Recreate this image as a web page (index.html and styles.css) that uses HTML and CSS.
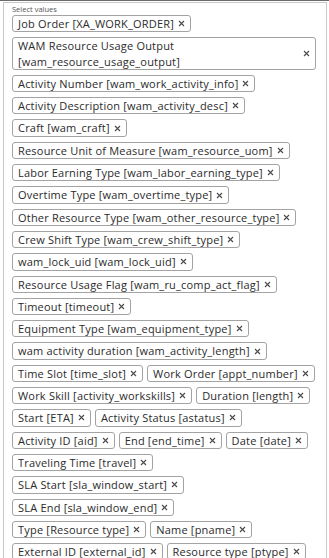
FILE: index.html
```html
<!DOCTYPE html>
<html>
<head>
    <title>Select values</title>
    <link rel="stylesheet" href="styles.css">
</head>
<body>
    <div class="frame">
        <div class="select-box">
            <div class="select-label">Select values</div>
            <div class="chips" id="chips"></div>
        </div>
    </div>

    <script>
        // Selected fields, in the order they were picked ('|' forces a new line)
        const values = [
            'Job Order [XA_WORK_ORDER]',
            'WAM Resource Usage Output [wam_resource_usage_output]',
            'Activity Number [wam_work_activity_info]',
            'Activity Description [wam_activity_desc]',
            'Craft [wam_craft]',
            'Resource Unit of Measure [wam_resource_uom]',
            'Labor Earning Type [wam_labor_earning_type]',
            'Overtime Type [wam_overtime_type]',
            'Other Resource Type [wam_other_resource_type]',
            'Crew Shift Type [wam_crew_shift_type]',
            'wam_lock_uid [wam_lock_uid]',
            'Resource Usage Flag [wam_ru_comp_act_flag]',
            'Timeout [timeout]',
            'Equipment Type [wam_equipment_type]',
            'wam activity duration [wam_activity_length]',
            'Time Slot [time_slot]',
            'Work Order [appt_number]',
            'Work Skill [activity_workskills]',
            'Duration [length]',
            'Start [ETA]',
            'Activity Status [astatus]',
            'Activity ID [aid]',
            'End [end_time]',
            'Date [date]',
            'Traveling Time [travel]',
            'SLA Start [sla_window_start]',
            'SLA End [sla_window_end]',
            '|',
            'Type [Resource type]',
            'Name [pname]',
            'External ID [external_id]',
            'Resource type [ptype]'
        ];

        const closeIcon = '<svg width="7" height="7" viewBox="0 0 7 7"><path d="M1 1L6 6M6 1L1 6" stroke="#4a4a4a" stroke-width="1.1"/></svg>';

        const list = document.getElementById('chips');
        values.forEach(function(v) {
            if (v === '|') {
                const br = document.createElement('span');
                br.className = 'chip-break';
                list.appendChild(br);
                return;
            }
            const chip = document.createElement('span');
            chip.className = 'chip';
            chip.innerHTML = '<span class="chip-text">' + v + '</span><span class="chip-close">' + closeIcon + '</span>';
            list.appendChild(chip);
        });
    </script>
</body>
</html>
```

FILE: styles.css
```css
body {
    margin: 0;
    font-family: "Open Sans", Arial, sans-serif;
    color: #2b2b2b;
    background: #fff;
}
.frame {
    border-top: 1px solid #6b6b6b;
    height: 557px;
    overflow: hidden;
}
.select-box {
    margin: 1px 2px 0 3px;
    border: 1px solid #c9c9c9;
    padding: 1px 10px 10px 8px;
    min-height: 600px;
}
.select-label {
    font-size: 7.5px;
    line-height: 10px;
    color: #555;
    margin-bottom: 1px;
}
.chips {
    display: flex;
    flex-wrap: wrap;
    column-gap: 4px;
}
.chip {
    display: inline-flex;
    align-items: center;
    border: 1px solid #a3a3a3;
    border-radius: 3px;
    padding: 0 5px;
    margin-bottom: 5px;
    font-size: 11px;
    letter-spacing: 0.2px;
    line-height: 15.3px;
    max-width: 100%;
    box-sizing: border-box;
}
.chip-text {
    flex: 1;
}
.chip-close {
    display: flex;
    margin-left: 4px;
}
.chip-break {
    flex-basis: 100%;
    height: 0;
}
```
